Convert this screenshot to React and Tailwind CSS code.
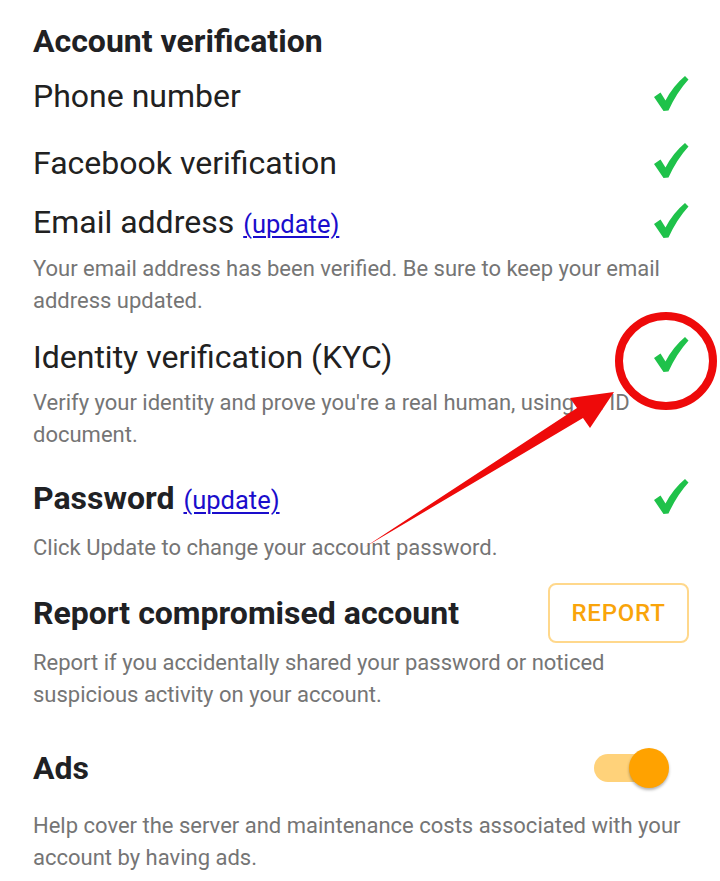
import React from 'react';

const Check = () => (
  <svg width="36" height="38" viewBox="0 0 36 38" className="shrink-0 -translate-y-[2px]">
    <path
      d="M1 22 L7.5 17.5 L12.5 25.5 Q20 11 32 1 L35.5 4.5 Q24 17 15.5 35.5 L10.5 36 Z"
      fill="#1fc24a"
    />
  </svg>
);

const UpdateLink = () => (
  <a href="#" className="ml-[9px] text-[25.5px] font-normal text-[#1a0dcc] underline underline-offset-[3px] decoration-[1.5px]">
    (update)
  </a>
);

const Desc = ({ className = '', children }) => (
  <p className={`text-[22px] leading-[32px] text-[#757575] ${className}`}>{children}</p>
);

const Row = ({ className = '', children, right }) => (
  <div className={`flex items-center justify-between ${className}`}>
    <div className="flex items-baseline">{children}</div>
    {right}
  </div>
);

const App = () => {
  return (
    <div
      className="relative w-[720px] h-[881px] bg-white overflow-hidden pl-[33px] pr-[31px] pt-[21px]"
      style={{ fontFamily: 'Roboto, "Noto Sans", sans-serif' }}
    >
      <h2 className="text-[32px] leading-[40px] font-bold text-[#202124]">
        Account verification
      </h2>

      <Row className="mt-[15px] h-[40px]" right={<Check />}>
        <span className="text-[32px] leading-[40px] text-[#212121]">Phone number</span>
      </Row>

      <Row className="mt-[27px] h-[40px]" right={<Check />}>
        <span className="text-[32px] leading-[40px] text-[#212121]">Facebook verification</span>
      </Row>

      <Row className="mt-[20px] h-[40px]" right={<Check />}>
        <span className="text-[32px] leading-[40px] text-[#212121]">Email address</span>
        <UpdateLink />
      </Row>
      <Desc className="mt-[10px] pr-[20px]">
        Your email address has been verified. Be sure to keep your email address updated.
      </Desc>

      <Row className="mt-[20px] h-[40px]" right={<Check />}>
        <span className="text-[32px] leading-[40px] text-[#212121]">Identity verification (KYC)</span>
      </Row>
      <Desc className="mt-[10px] pr-[20px]">
        Verify your identity and prove you're a real human, using an ID document.
      </Desc>

      <Row className="mt-[28px] h-[40px]" right={<Check />}>
        <span className="text-[32px] leading-[40px] font-bold text-[#202124]">Password</span>
        <UpdateLink />
      </Row>
      <Desc className="mt-[13px]">Click Update to change your account password.</Desc>

      <div className="mt-[19px] flex items-center justify-between h-[60px]">
        <span className="text-[32px] leading-[40px] font-bold text-[#202124]">
          Report compromised account
        </span>
        <button className="w-[141px] h-[60px] rounded-[8px] border-2 border-[#ffd88c] text-[24px] font-medium text-[#f9a40a] tracking-[0.8px]">
          REPORT
        </button>
      </div>
      <Desc className="mt-[4px] pr-[20px]">
        Report if you accidentally shared your password or noticed suspicious activity on your account.
      </Desc>

      <div className="mt-[37px] flex items-center justify-between h-[40px]">
        <span className="text-[32px] leading-[40px] font-bold text-[#202124]">Ads</span>
        <div className="relative w-[76px] h-[40px] mr-[19px] flex items-center">
          <div className="w-[60px] h-[28px] rounded-full bg-[#ffd27a]" />
          <div className="absolute right-[1px] top-0 w-[40px] h-[40px] rounded-full bg-[#ffa200] shadow-[0_2px_3px_rgba(0,0,0,0.3)]" />
        </div>
      </div>
      <Desc className="mt-[22px] -mr-[10px]">
        Help cover the server and maintenance costs associated with your account by having ads.
      </Desc>

      {/* red markup over the KYC check */}
      <svg className="absolute inset-0 pointer-events-none" width="720" height="881">
        <ellipse cx="666" cy="361" rx="47" ry="45" fill="none" stroke="#ee0a0a" strokeWidth="8" />
        <polygon
          points="365,547 577,408 570,398 614,392 590,428 583,418"
          fill="#ee0a0a"
        />
      </svg>
    </div>
  );
};

export default App;
